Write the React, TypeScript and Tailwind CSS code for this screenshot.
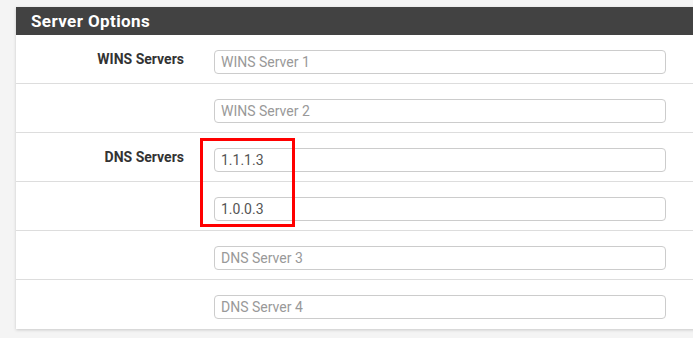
import React from 'react';

type Row = {
  label?: string;
  value?: string;
  placeholder: string;
};

const rows: Row[] = [
  { label: 'WINS Servers', placeholder: 'WINS Server 1' },
  { placeholder: 'WINS Server 2' },
  { label: 'DNS Servers', value: '1.1.1.3', placeholder: 'DNS Server 1' },
  { value: '1.0.0.3', placeholder: 'DNS Server 2' },
  { placeholder: 'DNS Server 3' },
  { placeholder: 'DNS Server 4' },
];

const App: React.FC = () => {
  return (
    <div
      className="h-[338px] w-[693px] overflow-hidden bg-[#f4f4f4] pt-[7px] pl-[16px]"
      style={{ fontFamily: 'Roboto, "Liberation Sans", sans-serif' }}
    >
      <div className="relative w-[700px] bg-white shadow-[0_1px_3px_rgba(0,0,0,0.18)]">
        {/* Panel header */}
        <div className="flex h-[28px] items-center bg-[#424242] pl-[15px]">
          <h2 className="text-[17px] font-bold leading-none tracking-[0.4px] text-white">Server Options</h2>
        </div>

        {/* Form rows */}
        <div>
          {rows.map((row, index) => (
            <div
              key={index}
              className={`flex h-[49px] items-start ${index < rows.length - 1 ? 'border-b border-[#dddddd]' : ''}`}
            >
              <div className="w-[183px] pt-[16px] pr-[15px] text-right text-[14px] font-bold leading-[17px] text-[#333333]">
                {row.label}
              </div>
              <div className="pt-[15px] pl-[15px]">
                <input
                  readOnly
                  defaultValue={row.value}
                  placeholder={row.placeholder}
                  className="h-[24px] w-[452px] rounded-[4px] border border-[#cccccc] bg-white px-[6px] text-[14px] text-[#555555] placeholder:text-[#999999] outline-none"
                />
              </div>
            </div>
          ))}
        </div>

        {/* Highlight box around DNS values */}
        <div className="pointer-events-none absolute left-[184px] top-[131px] h-[89px] w-[95px] border-[3px] border-[#ff0000]" />
      </div>
    </div>
  );
};

export default App;
